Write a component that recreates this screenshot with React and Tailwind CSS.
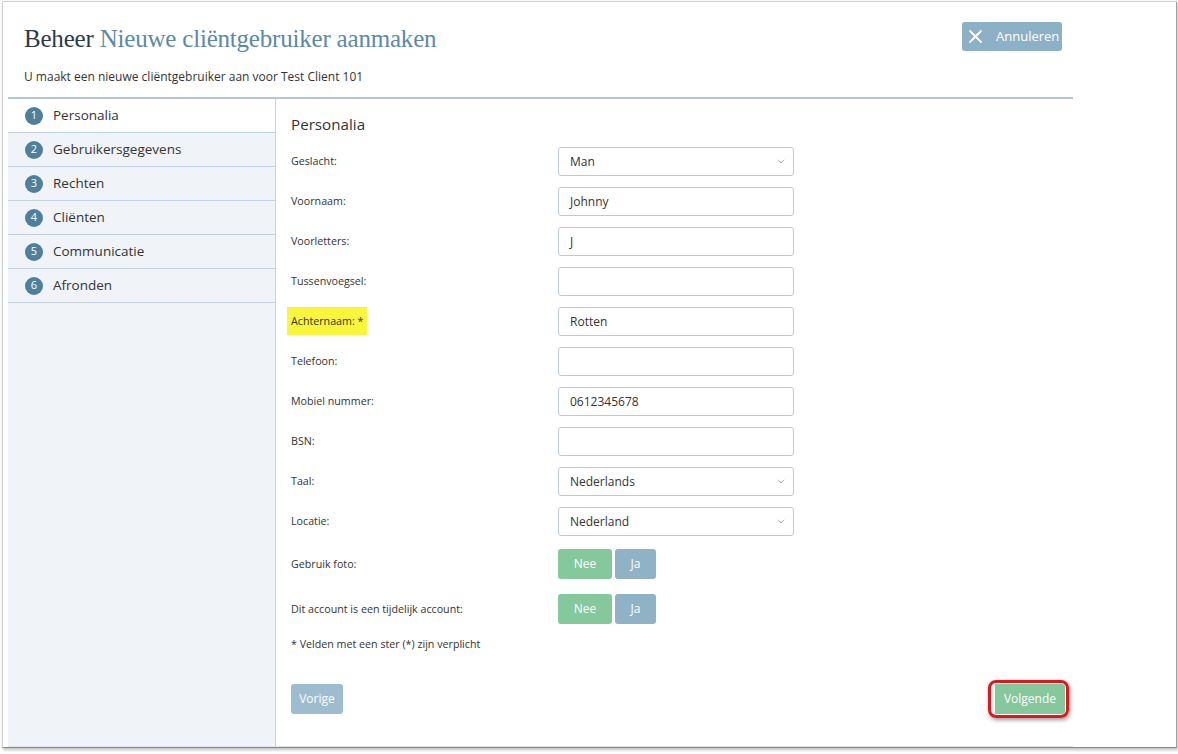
import React from "react";

const steps = ["Personalia", "Gebruikersgegevens", "Rechten", "Cliënten", "Communicatie", "Afronden"];

function Chevron() {
  return (
    <svg width="8" height="5" viewBox="0 0 8 5" fill="none" stroke="#a9b6bd" strokeWidth="1">
      <path d="M0.8 0.8l3.2 3.2L7.2 0.8" />
    </svg>
  );
}

function Field({ label, value, select, highlight }) {
  return (
    <div className="flex items-center h-[29px] mt-[11px]">
      <div className="w-[267px] text-[10.7px] text-[#333]">
        {highlight ? (
          <span className="bg-[#f9f53a] -ml-[4px] px-[4px] py-[7px]">{label}</span>
        ) : (
          label
        )}
      </div>
      <div className="w-[236px] h-[29px] border border-[#b9cbd5] rounded-[3px] bg-white flex items-center justify-between pl-[11px] pr-[8px] text-[12px] text-[#333]">
        <span>{value}</span>
        {select && <Chevron />}
      </div>
    </div>
  );
}

function Toggle({ label, className }) {
  return (
    <div className={"flex items-center h-[30px] " + className}>
      <div className="w-[267px] text-[10.7px] text-[#333]">{label}</div>
      <div className="flex gap-[3px]">
        <div className="w-[54px] h-[30px] rounded-[3px] bg-[#84c89c] text-white text-[12px] flex items-center justify-center">Nee</div>
        <div className="w-[41px] h-[30px] rounded-[3px] bg-[#8fb2c7] text-white text-[12px] flex items-center justify-center">Ja</div>
      </div>
    </div>
  );
}

export default function App() {
  return (
    <div className="w-[1178px] h-[754px] bg-white" style={{ fontFamily: '"Open Sans", "Noto Sans", sans-serif' }}>
      <div className="ml-[2px] mt-[1px] w-[1175px] h-[747px] border border-[#d0d0d0] border-b-[#8a8a8a] border-r-[#a0a0a0] shadow-[1px_2px_3px_rgba(0,0,0,0.25)] pl-[5px] flex flex-col">
        <div className="w-[1065px] flex flex-col flex-1 border-b border-[#dde3e7]">
          {/* header */}
          <div className="h-[97px] border-b-2 border-[#b5c7d1] flex justify-between pl-[16px] pr-[11px]">
            <div className="flex flex-col">
              <div className="mt-[21px] text-[25px] leading-[31px] tracking-[-0.2px]" style={{ fontFamily: '"Liberation Serif", serif' }}>
                <span className="text-[#2e3a44]">Beheer </span>
                <span className="text-[#5b8aa6]">Nieuwe cliëntgebruiker aanmaken</span>
              </div>
              <div className="mt-[14px] text-[12px] text-[#333]">U maakt een nieuwe cliëntgebruiker aan voor Test Client 101</div>
            </div>
            <div className="mt-[20px] h-[29px] w-[100px] bg-[#8cb0c5] rounded-[3px] flex items-center pl-[6px] gap-[13px] text-white text-[13px]">
              <svg width="15" height="15" viewBox="0 0 15 15" stroke="white" strokeWidth="1.8" fill="none">
                <path d="M1.5 1.5l12 12M13.5 1.5l-12 12" />
              </svg>
              <span>Annuleren</span>
            </div>
          </div>

          {/* body */}
          <div className="flex flex-1">
            <div className="w-[268px] bg-[#f0f4f8] border-r border-[#c5d4dd]">
              {steps.map((s, i) => (
                <div
                  key={s}
                  className={
                    "h-[34px] border-b border-[#c2d1da] flex items-center pl-[17px] gap-[10px] " +
                    (i === 0 ? "bg-white" : "")
                  }
                >
                  <div className="w-[18px] h-[18px] rounded-full bg-[#4e809c] text-white text-[11px] flex items-center justify-center">
                    {i + 1}
                  </div>
                  <span className="text-[13.5px] text-[#333]">{s}</span>
                </div>
              ))}
            </div>

            <div className="flex-1 flex flex-col pl-[15px] pr-[15px]">
              <div className="mt-[14px] text-[15.2px] leading-[22px] text-[#333]">Personalia</div>
              <div className="mt-[1px]">
                <Field label="Geslacht:" value="Man" select />
                <Field label="Voornaam:" value="Johnny" />
                <Field label="Voorletters:" value="J" />
                <Field label="Tussenvoegsel:" value="" />
                <Field label="Achternaam: *" value="Rotten" highlight />
                <Field label="Telefoon:" value="" />
                <Field label="Mobiel nummer:" value="0612345678" />
                <Field label="BSN:" value="" />
                <Field label="Taal:" value="Nederlands" select />
                <Field label="Locatie:" value="Nederland" select />
              </div>
              <Toggle label="Gebruik foto:" className="mt-[13px]" />
              <Toggle label="Dit account is een tijdelijk account:" className="mt-[15px]" />
              <div className="mt-[12px] text-[10.7px] text-[#333]">* Velden met een ster (*) zijn verplicht</div>
              <div className="mt-[28px] flex items-center justify-between">
                <div className="w-[52px] h-[30px] rounded-[3px] bg-[#9dbdce] text-white text-[12px] flex items-center justify-center">Vorige</div>
                <div className="-mr-[11px] border-[3px] border-[#e0161b] rounded-[8px] p-[1px] shadow-[1px_2px_4px_rgba(0,0,0,0.4)]">
                  <div className="w-[73px] h-[30px] rounded-[3px] bg-[#84c89c] border-l-[3px] border-[#eef6f1] text-white text-[12px] flex items-center justify-center">Volgende</div>
                </div>
              </div>
            </div>
          </div>
        </div>
      </div>
    </div>
  );
}
